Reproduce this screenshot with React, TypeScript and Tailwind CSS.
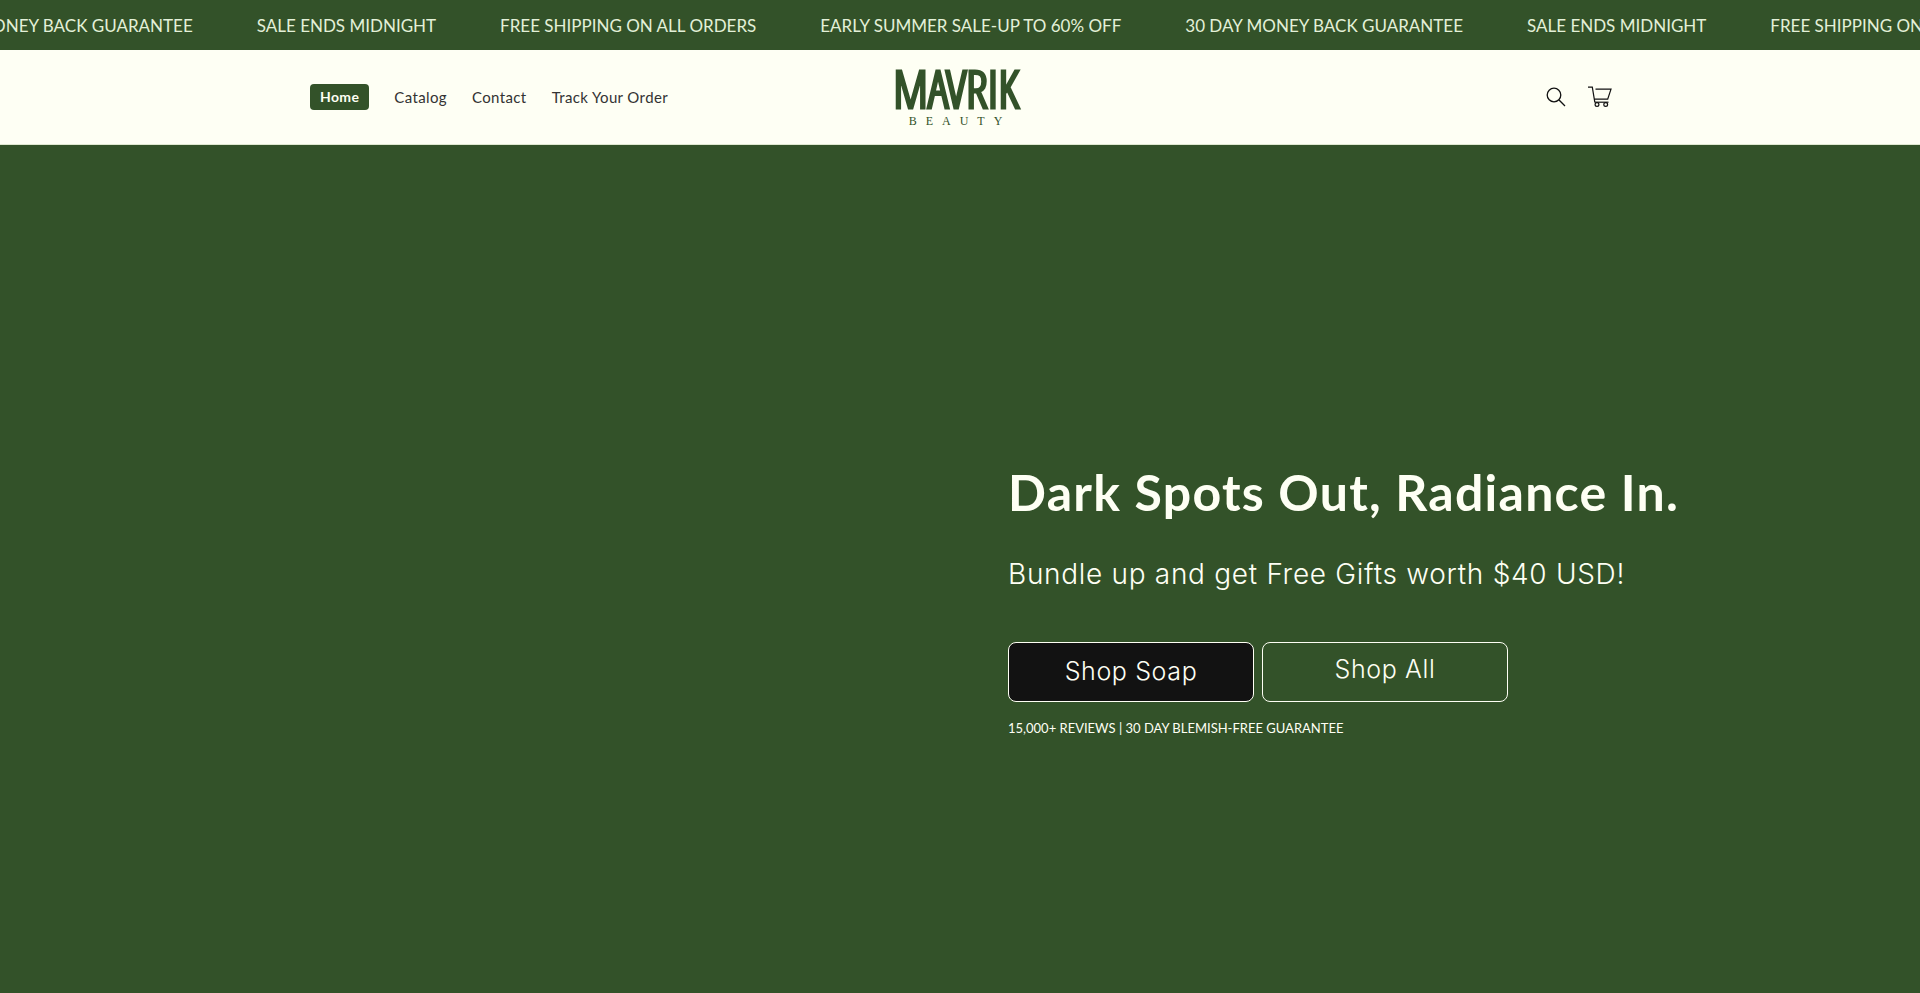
import type { ReactNode } from 'react';

const announcements = [
  '30 DAY MONEY BACK GUARANTEE',
  'SALE ENDS MIDNIGHT',
  'FREE SHIPPING ON ALL ORDERS',
  'EARLY SUMMER SALE-UP TO 60% OFF',
  '30 DAY MONEY BACK GUARANTEE',
  'SALE ENDS MIDNIGHT',
  'FREE SHIPPING ON ALL ORDERS'
];

const links = ['Catalog', 'Contact', 'Track Your Order'];

const AnnouncementBar = () => (
  <div className="overflow-hidden bg-[#335229] text-[#e3f0d8]">
    <ul className="-ml-[85px] flex h-[50px] w-max items-center gap-16 pt-0.5 text-[17px] whitespace-nowrap">
      {announcements.map((text, i) => (
        <li key={i}>{text}</li>
      ))}
    </ul>
  </div>
);

const IconButton = ({ label, children }: { label: string; children: ReactNode }) => (
  <button type="button" aria-label={label} className="flex size-11 items-center justify-center text-[#121212]">
    {children}
  </button>
);

const Logo = () => (
  <a href="#" className="flex flex-col items-center pr-2 pb-0.5 text-[#335229]">
    <span className='font-["Open_Sans_Condensed_Light","Open_Sans_Condensed","Roboto_Condensed",sans-serif] text-[51px] leading-[50px] font-light [-webkit-text-stroke:3px_#335229]'>
      MAVRIK
    </span>
    <span className='pl-2 font-["Liberation_Serif",serif] text-xs leading-4 tracking-[9px]'>BEAUTY</span>
  </a>
);

const Header = () => (
  <header className="border-b border-[#dfe8d0] bg-[#fefff4]">
    <div className="mx-auto grid h-[94px] max-w-[1400px] grid-cols-[1fr_auto_1fr] items-center px-[50px]">
      <nav className="flex items-center gap-[25px] text-[15px] tracking-wide text-[#333]">
        <a
          href="#"
          aria-current="page"
          className="rounded-sm bg-[#335229] px-2.5 py-[3px] text-sm font-bold text-[#fefff4]"
        >
          Home
        </a>
        {links.map((link) => (
          <a key={link} href="#">
            {link}
          </a>
        ))}
      </nav>
      <Logo />
      <div className="-mr-3 flex justify-end">
        <IconButton label="Search">
          <svg viewBox="0 0 20 20" className="size-5" fill="none" stroke="currentColor" strokeWidth="1.3">
            <circle cx="8" cy="8" r="6.8" />
            <path d="M12.8 12.8 19 19" />
          </svg>
        </IconButton>
        <IconButton label="Cart">
          <svg viewBox="0 0 24 22" className="h-[22px] w-6" fill="none" stroke="currentColor" strokeWidth="1.2">
            <path d="M0 1.2h4.3L6.8 16.2" />
            <path d="M7.5 3.2H23l-3.3 10H6.3" />
            <path d="M6.5 16.2h14" />
            <circle cx="9" cy="18.5" r="1.9" />
            <circle cx="17.7" cy="18.5" r="1.9" />
          </svg>
        </IconButton>
      </div>
    </div>
  </header>
);

const Hero = () => (
  <main className="grid flex-1 grid-cols-2 items-center bg-[#335229] text-[#fefff4]">
    <section className="col-start-2 px-12 pt-[62px]">
      <h1 className="text-[50px] leading-[60px] font-bold tracking-wide">Dark Spots Out, Radiance In.</h1>
      <p className='mt-8 font-["Inter",sans-serif] text-[28px] leading-10 font-light tracking-wide'>
        Bundle up and get Free Gifts worth $40 USD!
      </p>
      <div className='mt-12 flex gap-2 font-["Inter",sans-serif] text-[25px] font-light tracking-wide'>
        <button type="button" className="h-[60px] w-[246px] rounded-lg border border-[#fefff4] bg-[#121212]">
          Shop Soap
        </button>
        <button type="button" className="h-[60px] w-[246px] rounded-lg border border-[#fefff4] pb-1">
          Shop All
        </button>
      </div>
      <p className="mt-4 text-[13px] leading-5">15,000+ REVIEWS | 30 DAY BLEMISH-FREE GUARANTEE</p>
    </section>
  </main>
);

export default function App() {
  return (
    <div className='flex min-h-screen flex-col font-["Lato",sans-serif]'>
      <AnnouncementBar />
      <Header />
      <Hero />
    </div>
  );
}
